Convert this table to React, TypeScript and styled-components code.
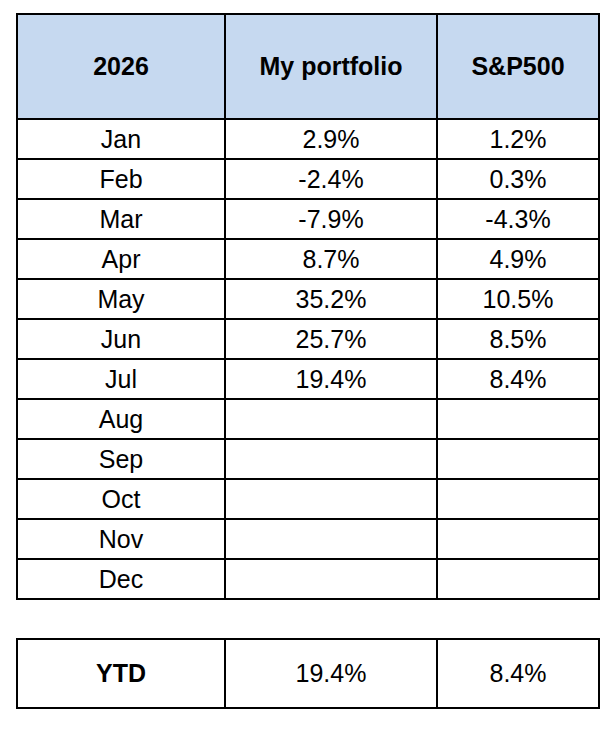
import React from "react";
import styled, { createGlobalStyle } from "styled-components";

const GlobalStyle = createGlobalStyle`
  html, body {
    margin: 0;
    padding: 0;
    background: #ffffff;
  }
  body {
    font-family: "Liberation Sans", Arial, sans-serif;
    color: #000;
  }
`;

const Page = styled.div`
  display: flex;
  flex-direction: column;
  gap: 38px;
  padding: 13px 0 0 16px;
`;

// gaps between cells show the black table background as 2px rules
const Grid = styled.table`
  border-collapse: separate;
  border-spacing: 2px;
  background: #000;
  table-layout: fixed;
  width: 584px;
  font-size: 25px;
`;

const HeadCell = styled.th`
  height: 103px;
  padding: 0;
  background: #c6d9f0;
  font-weight: bold;
  text-align: center;
  vertical-align: middle;
`;

const Cell = styled.td<{ $tall?: boolean; $bold?: boolean }>`
  height: ${(p) => (p.$tall ? "67px" : "38px")};
  padding: 0;
  background: #fff;
  text-align: center;
  vertical-align: middle;
  font-weight: ${(p) => (p.$bold ? "bold" : "normal")};
`;

const months: [string, string, string][] = [
  ["Jan", "2.9%", "1.2%"],
  ["Feb", "-2.4%", "0.3%"],
  ["Mar", "-7.9%", "-4.3%"],
  ["Apr", "8.7%", "4.9%"],
  ["May", "35.2%", "10.5%"],
  ["Jun", "25.7%", "8.5%"],
  ["Jul", "19.4%", "8.4%"],
  ["Aug", "", ""],
  ["Sep", "", ""],
  ["Oct", "", ""],
  ["Nov", "", ""],
  ["Dec", "", ""],
];

function Cols() {
  return (
    <colgroup>
      <col style={{ width: 206 }} />
      <col style={{ width: 210 }} />
      <col style={{ width: 160 }} />
    </colgroup>
  );
}

export default function App() {
  return (
    <>
      <GlobalStyle />
      <Page>
        <Grid>
          <Cols />
          <thead>
            <tr>
              <HeadCell>2026</HeadCell>
              <HeadCell>My portfolio</HeadCell>
              <HeadCell>S&amp;P500</HeadCell>
            </tr>
          </thead>
          <tbody>
            {months.map(([m, mine, sp]) => (
              <tr key={m}>
                <Cell>{m}</Cell>
                <Cell>{mine}</Cell>
                <Cell>{sp}</Cell>
              </tr>
            ))}
          </tbody>
        </Grid>
        <Grid>
          <Cols />
          <tbody>
            <tr>
              <Cell $tall $bold>
                YTD
              </Cell>
              <Cell $tall>19.4%</Cell>
              <Cell $tall>8.4%</Cell>
            </tr>
          </tbody>
        </Grid>
      </Page>
    </>
  );
}
